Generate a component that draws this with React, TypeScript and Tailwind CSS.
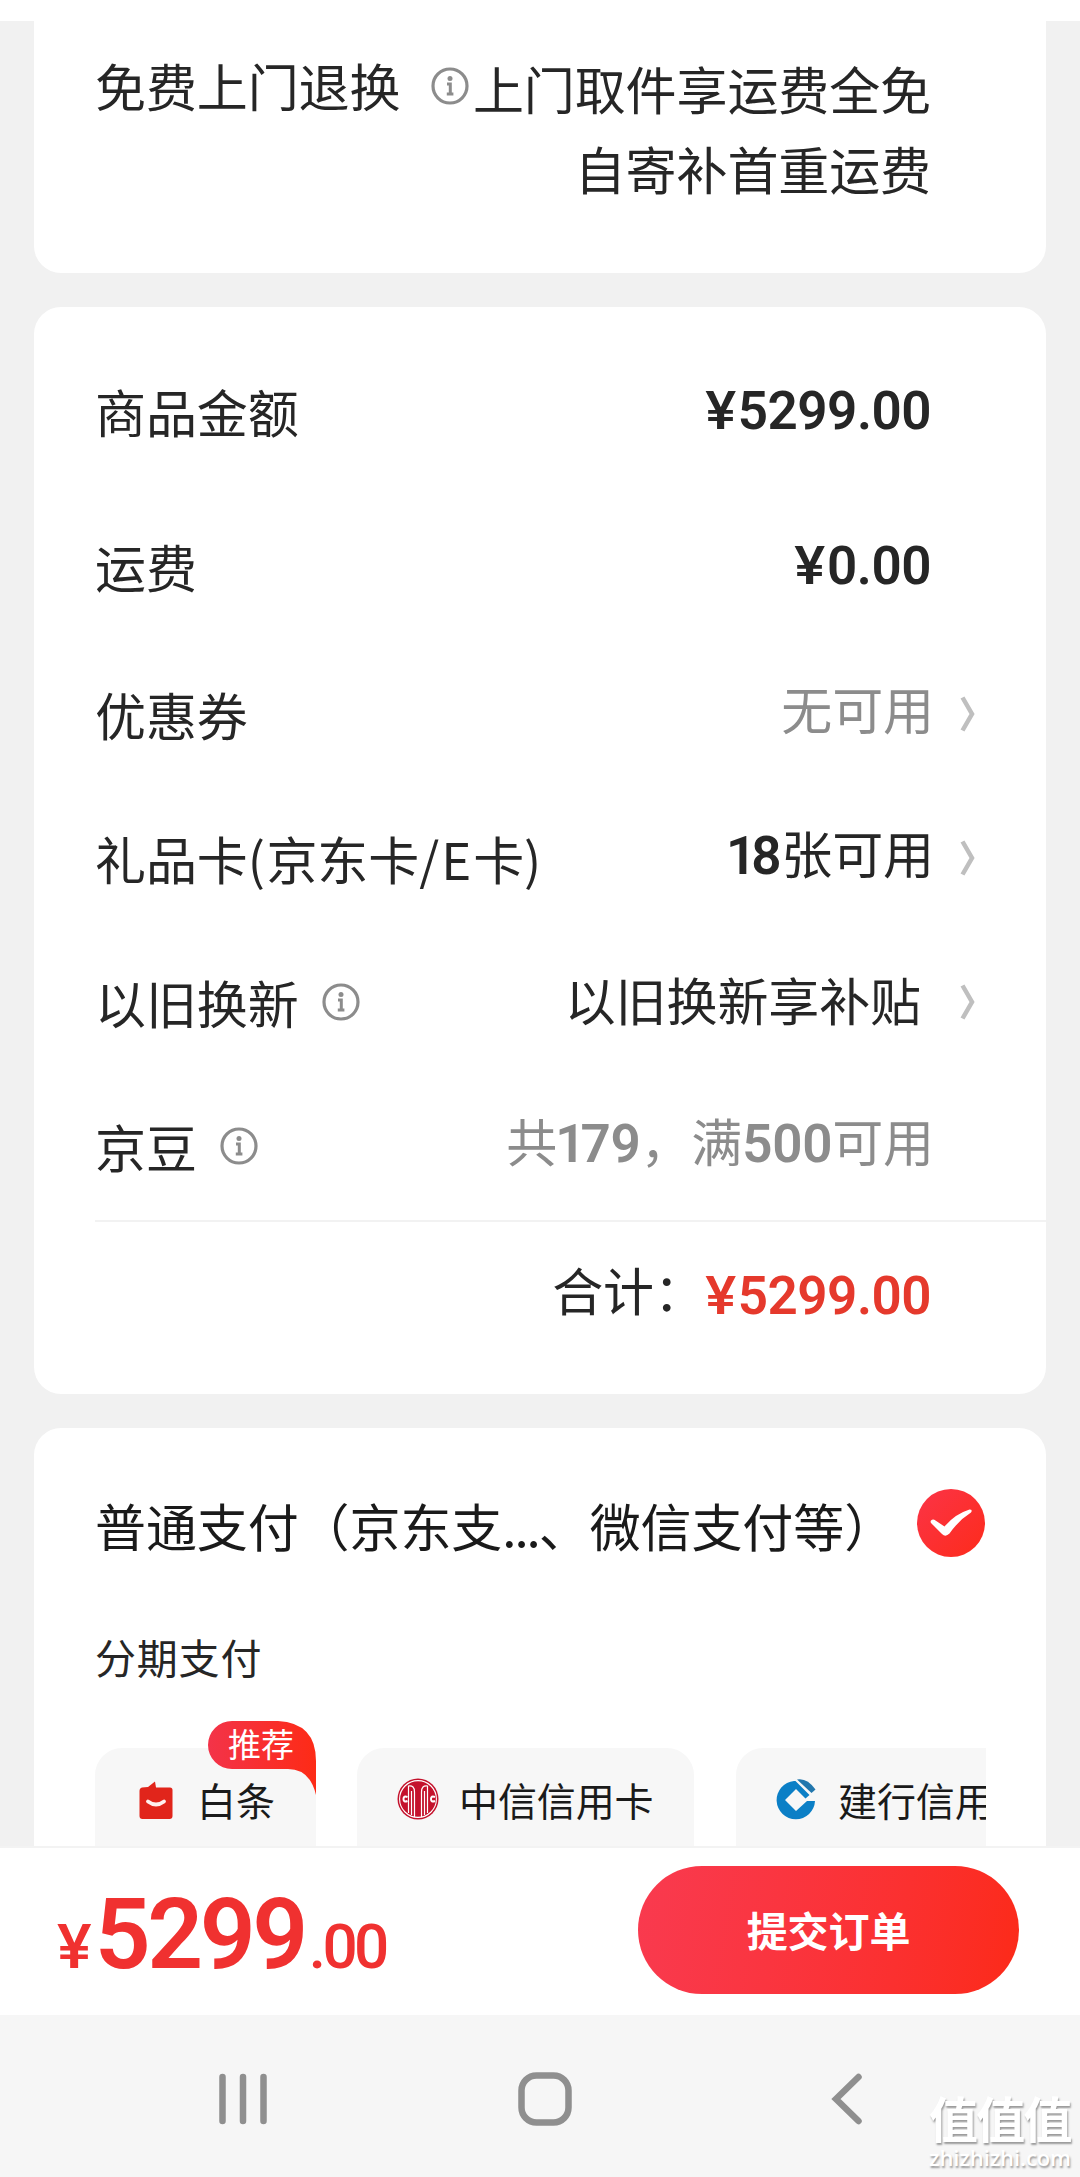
import { ReactNode } from 'react';

interface RowProps {
  label: ReactNode;
  className: string;
  info?: boolean;
  arrow?: boolean;
  children: ReactNode;
}

function InfoIcon({ className }: { className: string }) {
  return (
    <svg viewBox="0 0 38 38" className={`size-[38px] shrink-0 ${className}`} fill="none">
      <circle cx="19" cy="19" r="17" stroke="#8c8c8c" strokeWidth="3.2" />
      <circle cx="19" cy="11.6" r="2.5" fill="#8c8c8c" />
      <path d="M16 17h3.300v9.600M15.800 27h6.600" stroke="#8c8c8c" strokeWidth="3" />
    </svg>
  );
}

function Chevron() {
  return (
    <svg viewBox="0 0 16 36" className="w-4 h-9" fill="none">
      <path d="M2.500 1.500L12 18L2.500 34.500" stroke="#bfbfbf" strokeWidth="4.500" />
    </svg>
  );
}

function Num({ children }: { children: ReactNode }) {
  return (
    <span className="font-[Roboto,sans-serif] font-semibold text-[53px] leading-none tracking-[-0.300px]">
      {children}
    </span>
  );
}

function Price({ value }: { value: string }) {
  return (
    <Num>
      <span className="inline-block font-medium scale-x-110 origin-right mr-[2px]">¥</span>
      <span className="tracking-[-0.500px]">{value}</span>
    </Num>
  );
}

// The digit "1" is set tighter than the others
function One() {
  return <span className="tracking-[-5px] -ml-[2px]">1</span>;
}

function Row({ label, className, info, arrow, children }: RowProps) {
  return (
    <div className={`flex items-start pl-[61px] leading-[72px] ${className}`}>
      <span>{label}</span>
      {info && <InfoIcon className="mt-[17px] ml-[23px]" />}
      <div className="flex-1" />
      {children}
      <div className="w-[115px] pl-[29px] pt-[18px]">{arrow && <Chevron />}</div>
    </div>
  );
}

function BaitiaoIcon() {
  return (
    <svg viewBox="0 0 34 40" className="w-[34px] h-10" fill="none">
      <path d="M3 7.500L9 7L16 1.500L17 7.500H31Q33.500 7.500 33.500 10V36Q33.500 39 30.500 39H3.500Q.5 39 .5 36V11Q.5 8 3 7.500Z" fill="#e1251b" />
      <path d="M9 21.500Q17 27.500 25 21.500" stroke="#fff0ee" strokeWidth="3.800" strokeLinecap="round" />
    </svg>
  );
}

function CiticIcon() {
  return (
    <svg viewBox="0 0 42 42" className="size-[42px]" fill="none">
      <circle cx="21" cy="21" r="20.500" fill="#c4122c" />
      <circle cx="21" cy="21" r="18.400" stroke="#fff" strokeWidth="1.100" />
      <g stroke="#fff" strokeWidth="1.200">
        <path d="M11.500 35V8Q17.500 7 17.500 14V39" />
        <path d="M14.500 37V13" />
        <path d="M30.500 35V8Q24.500 7 24.500 14V39" />
        <path d="M27.500 37V13" />
      </g>
      <path d="M10.500 19Q6.500 17.500 6.500 21Q6.500 24.500 10.500 23" stroke="#fff" strokeWidth="2" />
      <path d="M38 19Q34 17.500 34 21Q34 24.500 38 23" stroke="#fff" strokeWidth="2" />
    </svg>
  );
}

function CcbIcon() {
  return (
    <svg viewBox="0 0 40 42" className="w-10 h-[42px]">
      <path d="M18 3A19.200 19.200 0 1 0 39 23H31L20 33L9 22L20 11L29.500 20.500L33.500 17L19.500 3Z" fill="#0b7fc6" />
      <path d="M21 1.500Q31 -.5 39.500 11.500L35.500 15L21 1.500Z" fill="#2277ad" />
    </svg>
  );
}

function Chip({ icon, text, className }: { icon: ReactNode; text: string; className: string }) {
  return (
    <div className={`h-[140px] shrink-0 rounded-[27px] bg-[#f7f7f7] flex items-start pt-[30px] ${className}`}>
      {icon}
      <span className="-mt-[1px] text-[39px] leading-[44px] whitespace-nowrap text-[#1a1a1a]">{text}</span>
    </div>
  );
}

export default function App() {
  return (
    <div className="w-[1080px] h-[2177px] overflow-hidden flex flex-col bg-[#f1f1f1] text-[#262626] text-[51px] tracking-[-0.100px] font-['Noto_Sans_CJK_SC',sans-serif]">
      <div className="h-[21px] bg-white shrink-0" />

      <main className="h-[1825px] shrink-0 overflow-hidden px-[34px]">
        {/* Return policy */}
        <section className="h-[252px] rounded-b-[27px] bg-white flex items-start pl-[61px] pr-[115px]">
          <span className="mt-[28px] leading-[72px]">免费上门退换</span>
          <InfoIcon className="mt-[46px] ml-[31px]" />
          <div className="mt-[27px] -ml-2 flex-1 text-right leading-[80px] whitespace-nowrap">
            <p>上门取件享运费全免</p>
            <p>自寄补首重运费</p>
          </div>
        </section>

        {/* Amounts */}
        <section className="mt-[34px] h-[1087px] rounded-[27px] bg-white pt-[68px]">
          <Row label="商品金额" className="h-[155px]">
            <span className="-mt-[4px]"><Price value="5299.00" /></span>
          </Row>
          <Row label="运费" className="h-[148px]">
            <span className="-mt-[4px]"><Price value="0.00" /></span>
          </Row>
          <Row label="优惠券" className="h-[144px]" arrow>
            <span className="-mt-[6px] -mr-[3px] text-[#8c8c8c]">无可用</span>
          </Row>
          <Row
            label={<>礼品卡<span className="tracking-[1.500px]">(</span>京东卡<span className="tracking-[2px]">/E</span>卡)</>}
            className="h-[144px]"
            arrow
          >
            <span className="-mt-[6px] -mr-[3px]"><Num><One />8</Num>张可用</span>
          </Row>
          <Row label="以旧换新" className="h-[144px]" info arrow>
            <span className="-mt-[3px] mr-[10px]">以旧换新享补贴</span>
          </Row>
          <Row label="京豆" className="h-[110px]" info>
            <span className="-mt-[6px] -mr-[3px] text-[#8c8c8c]">共<Num><One />79</Num>，满<Num>500</Num>可用</span>
          </Row>
          <div className="ml-[61px] h-[2px] bg-[#f2f2f2]" />
          <div className="mt-[31px] pr-[115px] flex justify-end leading-[72px]">
            <span className="mr-[3px]">合计：</span>
            <span className="mt-[3px] text-[#e5392c]"><Price value="5299.00" /></span>
          </div>
        </section>

        {/* Payment */}
        <section className="mt-[34px] h-[500px] rounded-t-[27px] bg-white pl-[61px] pr-[61px] pt-[61px]">
          <div className="flex items-start justify-between">
            <span className="leading-[72px] whitespace-nowrap text-[#1a1a1a]">
              普通支付（京东支<span className="tracking-[-2px]">...</span>、微信支付等）
            </span>
            <svg viewBox="0 0 68 68" className="size-[68px] shrink-0">
              <defs>
                <linearGradient id="check" x1="0" y1="0" x2="1" y2="1">
                  <stop stopColor="#fb3447" />
                  <stop offset="1" stopColor="#fd2b1b" />
                </linearGradient>
              </defs>
              <circle cx="34" cy="34" r="34" fill="url(#check)" />
              <path d="M14 31.500Q16 29.500 18.500 31.500L27.500 37.500Q38 25 52.500 20.500Q56 20.500 54 23.500Q42 31 32.500 44.500Q28.500 48.500 25 45L14.500 34.500Q13 33 14 31.500Z" fill="#fff" />
            </svg>
          </div>
          <p className="mt-[65px] text-[41px] tracking-[0.800px] leading-[60px]">分期支付</p>
          <div className="mt-[62px] flex gap-[41px] w-[891px]">
            <div className="relative">
              <Chip icon={<div className="mt-[2px] ml-[44px] mr-[24px]"><BaitiaoIcon /></div>} text="白条" className="w-[221px]" />
              <div className="absolute right-0 -top-[27px] w-[108px] h-[74px]">
                <svg viewBox="0 0 108 74" className="absolute inset-0">
                  <defs>
                    <linearGradient id="badge">
                      <stop stopColor="#f33349" />
                      <stop offset="1" stopColor="#fd2b16" />
                    </linearGradient>
                  </defs>
                  <path d="M24 0H70Q108 2 108 40V74Q102 48 80 48H24A24 24 0 0 1 24 0Z" fill="url(#badge)" />
                </svg>
                <span className="relative block pl-[20px] text-[33px] leading-[44px] text-white">推荐</span>
              </div>
            </div>
            <div className="flex-1 flex gap-[42px] overflow-hidden">
              <Chip icon={<div className="ml-[40px] mr-[20px]"><CiticIcon /></div>} text="中信信用卡" className="w-[337px]" />
              <Chip icon={<div className="ml-[40px] mr-[22px]"><CcbIcon /></div>} text="建行信用卡" className="w-[337px]" />
            </div>
          </div>
        </section>
      </main>

      {/* Submit bar */}
      <footer className="h-[169px] shrink-0 border-t-2 border-[#f3f3f3] bg-white flex items-start justify-between pl-[57px] pr-[61px]">
        <div className="mt-[29px] flex items-baseline font-[Roboto,sans-serif] font-semibold text-[#f03130] leading-[116px]">
          <span className="text-[62px] font-medium scale-x-105 origin-left">¥</span>
          <span className="ml-[5px] text-[98px] tracking-[-3.500px]">5299</span>
          <span className="ml-[4px] text-[62px] font-medium tracking-[-3.600px]">.00</span>
        </div>
        <button className="mt-[18px] w-[381px] h-[128px] rounded-full bg-linear-100 from-[#f93a4f] to-[#fc2a17] text-white text-[41px] font-bold">
          提交订单
        </button>
      </footer>

      {/* System navigation */}
      <nav className="relative h-[162px] shrink-0 bg-[#f6f6f6] flex items-start pt-[57px] pl-[219px]">
        <svg viewBox="0 0 48 54" className="w-12 h-[54px]">
          <path d="M3.500 5V49M24 5V49M44.500 5V49" stroke="#8f8f8f" strokeWidth="6.500" strokeLinecap="round" />
        </svg>
        <svg viewBox="0 0 54 54" className="ml-[251px] size-[54px]" fill="none">
          <rect x="3.500" y="3.500" width="47" height="47" rx="15" stroke="#8f8f8f" strokeWidth="6.500" />
        </svg>
        <svg viewBox="0 0 32 54" className="ml-[259px] w-8 h-[54px]" fill="none">
          <path d="M27.500 5L5 27L27.500 49" stroke="#8f8f8f" strokeWidth="6.500" strokeLinecap="round" />
        </svg>
        <div className="absolute left-[929px] top-[77px] text-white [text-shadow:1px_2px_2px_#999]">
          <p className="text-[49px] leading-[50px] tracking-[-1.800px] font-bold">值值值</p>
          <p className="mt-[2px] font-['Open_Sans',sans-serif] text-[22px] leading-[26px] font-semibold">zhizhizhi.com</p>
        </div>
      </nav>
    </div>
  );
}
